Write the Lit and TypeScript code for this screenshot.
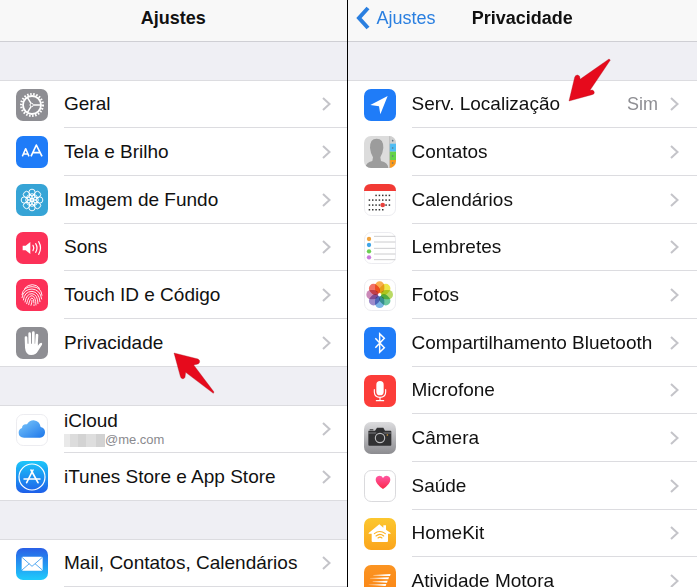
import { LitElement, html, svg, css, nothing, SVGTemplateResult, TemplateResult } from "lit";
import { customElement, property } from "lit/decorators.js";
import { classMap } from "lit/directives/class-map.js";

interface Item {
  icon: string;
  label: string;
  account?: string;
  value?: string;
  arrow?: "up" | "down";
}

interface Group {
  items: Item[];
  continues?: boolean;
}

const tile = (fill: string) => svg`<rect width="96" height="96" rx="21" fill=${fill} />`;
const paperTile = svg`<rect x="1.5" y="1.5" width="93" height="93" rx="20" fill="#fff" stroke="#ececf0" stroke-width="3" />`;
const gradient = (id: string, from: string, to: string) => svg`
  <linearGradient id=${id} x1="0" y1="0" x2="0" y2="1">
    <stop offset="0" stop-color=${from} /><stop offset="1" stop-color=${to} />
  </linearGradient>`;

const turns = [0, 45, 90, 135, 180, 225, 270, 315];
const petals = ["#f9a63a", "#ebe435", "#b3d654", "#5cc296", "#6cade2", "#9480c6", "#c67cb0", "#f16355"];
const calendarRows: [number, number, number][] = [[34, 36, 76], [48, 16, 76], [63, 16, 76], [77, 16, 56]];
const calendarDots = calendarRows.flatMap(([y, from, to]) => {
  const dots: [number, number][] = [];
  for (let x = from; x <= to; x += 10) dots.push([x, y]);
  return dots;
});

const icons: Record<string, SVGTemplateResult> = {
  general: svg`${tile("#8e8e93")}
    <g fill="none" stroke="#fff">
      <circle cx="48" cy="48" r="32.5" stroke-width="7" stroke-dasharray="4.6 4.56" />
      <circle cx="48" cy="48" r="27" stroke-width="5.5" />
      <path d="M53 48H75M45 43L34 25M45 53L34 71" stroke-width="4.4" />
      <circle cx="47" cy="48" r="5" stroke-width="3" />
    </g>`,
  display: svg`${tile("#1f7cf8")}
    <g fill="none" stroke="#fff" stroke-linejoin="round">
      <path d="M19 61L29 38L39 61M22 54H36" stroke-width="4.4" />
      <path d="M45 61L61 27L78 61M50 50H73" stroke-width="5" />
    </g>`,
  wallpaper: svg`${tile("#36a4d6")}
    <g fill="none" stroke="#fff" stroke-width="2.8">
      ${turns.map((t) => svg`<g transform="rotate(${t} 48 48)"><circle cx="48" cy="25" r="9.5" /><circle cx="48" cy="37" r="8" /></g>`)}
      <circle cx="48" cy="48" r="5" />
    </g>`,
  sounds: svg`${tile("#fc3158")}
    <path d="M20 41H29L43 30V66L29 55H20Z" fill="#fff" />
    <g fill="none" stroke="#fff" stroke-width="3.6" stroke-linecap="round">
      <path d="M51 40Q56 48 51 56" /><path d="M59 35Q67 48 59 61" /><path d="M68 29Q79 48 68 67" />
    </g>`,
  touch: svg`${tile("#fc3158")}
    <g fill="none" stroke="#fff" stroke-width="2.7" stroke-linecap="round">
      <path d="M26 28Q36 17 49 17Q62 17 71 28" />
      <path d="M18 47Q21 24 48 23Q76 24 78 49" />
      <path d="M18 56Q22 31 48 30Q73 32 77 60" />
      <path d="M22 63Q25 38 48 37Q69 39 72 68" />
      <path d="M27 69Q31 44 48 44Q65 46 66 74" />
      <path d="M32 74Q37 50 48 50Q59 52 60 78" />
      <path d="M38 77Q42 57 48 57Q54 58 54 72" />
      <path d="M45 79Q48 72 48 64M54 77V80" />
    </g>`,
  privacy: svg`${tile("#8e8e93")}
    <g stroke="#fff" stroke-width="8" stroke-linecap="round" fill="#fff">
      <path d="M30 32L31 58M41 20L41.500 55M52 17V55M63 24L61 58" />
    </g>
    <path d="M27 50V62Q29 84 46 84Q60 84 66 72L78 53Q80 48 76 47Q71 47 65 57V50Z" fill="#fff" />`,
  icloud: svg`${paperTile}
    <defs><linearGradient id="cloud" x1="0" y1="0" x2="1" y2="1">
      <stop offset="0" stop-color="#7cc8fb" /><stop offset="1" stop-color="#1c76ea" />
    </linearGradient></defs>
    <path d="M24 71Q8 70 8 56Q8 45 18 42Q19 29 33 31Q40 19 53 19Q71 21 74 39Q88 43 87 56Q85 70 72 71Z" fill="url(#cloud)" />`,
  store: svg`<defs>${gradient("store", "#1cc6f9", "#1e5fe9")}</defs>${tile("url(#store)")}
    <g fill="none" stroke="#fff" stroke-linecap="round">
      <circle cx="48" cy="48" r="39" stroke-width="3.6" />
      <path d="M51 27L32 65M45 27L66 65" stroke-width="5" />
      <path d="M24 54H72" stroke-width="4.5" />
    </g>`,
  mail: svg`<defs>${gradient("mail", "#2a5fe6", "#1fcbfc")}</defs>${tile("url(#mail)")}
    <rect x="17" y="26" width="63" height="42" rx="4" fill="#fff" />
    <path d="M18 28L48 55L79 28M18 66L40 47M79 66L57 47" fill="none" stroke="#3a9df0" stroke-width="2.6" />`,
  location: svg`${tile("#1f7cf8")}<path d="M71 21L49 76L45 52L19 48Z" fill="#fff" />`,
  contacts: svg`<defs><clipPath id="card"><rect width="96" height="96" rx="21" /></clipPath></defs>
    <g clip-path="url(#card)">
      <rect width="96" height="96" fill="#dcdcdc" />
      <path d="M4 96Q5 80 25 75L27 64Q20 54 18 36Q17 8 38 8Q59 8 58 36Q56 54 49 64L51 75Q72 80 73 96Z" fill="#9c9c9c" />
      <rect x="77" width="19" height="23" fill="#d0d0d0" />
      <rect x="77" y="23" width="19" height="24" fill="#50bdf4" />
      <rect x="77" y="47" width="19" height="25" fill="#63d348" />
      <rect x="77" y="72" width="19" height="24" fill="#fb9a1c" />
      <path d="M77 0V96" stroke="#b4b4b4" stroke-width="2" />
      <g fill="#5d7480"><circle cx="86" cy="14" r="2.500" /><circle cx="86" cy="36" r="2.500" /><circle cx="86" cy="60" r="2.500" /><circle cx="86" cy="81" r="2.500" /></g>
    </g>`,
  calendar: svg`${paperTile}
    <path d="M0 21Q0 0 21 0H75Q96 0 96 21Z" fill="#f23a35" />
    ${calendarDots.map(([x, y]) => svg`<rect x=${x - 2} y=${y - 2} width="4.500" height="4.500" fill="#333" />`)}
    <circle cx="56" cy="63" r="7" fill="#e8423d" />`,
  reminders: svg`${paperTile}
    <path d="M30 13H94M30 30H94M30 49H94M30 66H94M30 83H94" stroke="#bfbfc2" stroke-width="2.4" />
    <circle cx="15" cy="21" r="6.500" fill="#efa23c" /><circle cx="15" cy="39" r="6.500" fill="#3fa5e8" />
    <circle cx="15" cy="58" r="6.500" fill="#6bcf52" /><circle cx="15" cy="76" r="6.500" fill="#c879dc" />`,
  photos: svg`${paperTile}
    <g class="petals">
      ${petals.map((c, i) => svg`<rect x="33" y="7" width="28" height="36" rx="14" fill=${c} opacity=".9" transform="rotate(${i * 45} 47 47)" />`)}
    </g>
    <circle cx="47" cy="47" r="4.500" fill="#fff" />`,
  bluetooth: svg`${tile("#1f7cf8")}
    <path d="M34 34L61 62L47 76V20L61 34L34 62" fill="none" stroke="#fff" stroke-width="4.4" />`,
  microphone: svg`${tile("#fc3d39")}
    <rect x="37" y="18" width="22" height="43" rx="11" fill="#fff" />
    <path d="M31 44V52Q32 67 48 67Q64 67 65 52V44M48 67V76M37 77H59" fill="none" stroke="#fff" stroke-width="3.4" stroke-linecap="round" />`,
  camera: svg`<defs>${gradient("camera", "#dcdcde", "#8c8c90")}</defs>${tile("url(#camera)")}
    <path d="M14 26H33L39 17H58L63 26H80Q82 26 82 29V68Q82 71 79 71H16Q13 71 13 68V29Q13 26 14 26ZM17 22H28V25H17Z" fill="#313133" />
    <path d="M13 33H37M58 33H82" stroke="#a8a8aa" stroke-width="2" />
    <circle cx="48" cy="48" r="18" fill="#313133" />
    <circle cx="48" cy="48" r="14" fill="none" stroke="#bcbcbe" stroke-width="3.4" />
    <circle cx="70" cy="39" r="2.500" fill="#d6a040" />`,
  health: svg`<defs>${gradient("heart", "#ff58a4", "#fb2748")}</defs>
    <rect x="1.500" y="1.500" width="93" height="93" rx="20" fill="#fff" stroke="#d4d4d8" stroke-width="2.6" />
    <path d="M57 57Q36 43 35 30Q35 18 46 17Q54 17 57 24Q61 17 68 17Q79 18 79 30Q78 43 57 57Z" fill="url(#heart)" />`,
  homekit: svg`<defs>${gradient("home", "#fcc72f", "#fba51c")}</defs>${tile("url(#home)")}
    <path d="M14 45L46 19L58 29V22H66V35L80 45V47H72V69Q72 72 69 72H26Q23 72 23 69V47H14Z" fill="#fff" />
    <g fill="none" stroke="#fcb324" stroke-width="3.4" stroke-linecap="round">
      <path d="M31 47Q47 34 64 47" /><path d="M36 54Q48 44 59 54" /><path d="M42 60Q48 55 54 60" />
    </g>`,
  motion: svg`<defs>
      ${gradient("motion", "#fb9422", "#fb8414")}
      <linearGradient id="streak" gradientUnits="userSpaceOnUse" x1="12" y1="0" x2="60" y2="0">
        <stop offset="0" stop-color="#fff" stop-opacity=".2" /><stop offset="1" stop-color="#fff" />
      </linearGradient>
    </defs>${tile("url(#motion)")}
    <path d="M28 30L80 27L78 33L28 32ZM18 39L75 37L73 43L18 41ZM26 49L71 47L69 53L26 51ZM14 58L67 57L65 63L14 60ZM24 68L61 67L59 73L24 70Z" fill="url(#streak)" />`,
};

const arrows: Record<string, TemplateResult> = {
  up: html`<svg class="arrow arrow-up" viewBox="69 94 126 126" aria-hidden="true">
    <path d="M72 97L144 115Q150 118 149 124Q148 130 141 131L131 133L192 214L190 218L107 155L105 170Q103 175 97 174Q92 173 91 167Z" />
  </svg>`,
  down: html`<svg class="arrow arrow-down" viewBox="85 24 132 132" aria-hidden="true">
    <path d="M88 153L105 82Q107 75 114 75Q121 77 121 84V88L208 27L212 30L151 121L158 120Q164 122 164 128Q164 133 157 134Z" />
  </svg>`,
};

@customElement("settings-row")
class SettingsRow extends LitElement {
  @property({ attribute: false }) item!: Item;

  static styles = css`
    :host { display: block; height: 100%; }
    .row {
      display: flex;
      gap: 16px;
      height: 100%;
      box-sizing: border-box;
      padding-left: 16px;
      color: #111;
      text-decoration: none;
      position: relative;
    }
    .icon { width: 32px; height: 32px; flex: none; align-self: center; }
    .petals { isolation: isolate; }
    .petals rect { mix-blend-mode: multiply; }
    .body {
      flex: 1;
      min-width: 0;
      display: flex;
      align-items: center;
      gap: 12px;
      padding-right: var(--edge, 16px);
      border-bottom: 1px solid var(--divider, #dcdce0);
    }
    .texts { flex: 1; min-width: 0; white-space: nowrap; position: relative; }
    .label { display: block; font-size: 19px; line-height: 22px; }
    .account {
      display: flex;
      align-items: center;
      font-size: 13px;
      line-height: 16px;
      color: #8a8a8e;
    }
    .masked {
      width: 41px;
      height: 13px;
      background: linear-gradient(90deg, #e9e9e9 6px, #dcdcdc 6px 14px, #d3d3d3 14px 22px, #dedede 22px 32px, #d2d2d2 32px);
    }
    .value { font-size: 18px; color: #8e8e93; }
    .chevron { width: 9px; height: 14px; flex: none; fill: none; stroke: #c4c4c9; stroke-width: 2; }
    .arrow { position: absolute; z-index: 1; fill: #e60a1c; stroke: #a81420; stroke-width: 1; overflow: visible; }
    .arrow-up { width: 42px; height: 42px; left: 109px; top: 20px; }
    .arrow-down { width: 44px; height: 44px; left: 156px; bottom: 13px; }
  `;

  render() {
    const { icon, label, account, value, arrow } = this.item;
    return html`<a class="row" href="#${icon}">
      <svg class="icon" viewBox="0 0 96 96" aria-hidden="true">${icons[icon]}</svg>
      <span class="body">
        <span class="texts">
          <span class="label">${label}</span>
          ${account ? html`<span class="account"><span class="masked"></span>${account}</span>` : nothing}
          ${arrow ? arrows[arrow] : nothing}
        </span>
        ${value ? html`<span class="value">${value}</span>` : nothing}
        <svg class="chevron" viewBox="0 0 9 14" aria-hidden="true"><path d="M1 1L7.500 7L1 13" /></svg>
      </span>
    </a>`;
  }
}

@customElement("settings-pane")
class SettingsPane extends LitElement {
  @property() heading = "";
  @property() back = "";
  @property({ attribute: false }) groups: Group[] = [];

  static styles = css`
    :host {
      display: block;
      background: #efeff4;
      overflow-x: hidden;
      overflow-y: auto;
      scrollbar-width: none;
    }
    .bar {
      display: grid;
      grid-template-columns: 1fr auto 1fr;
      line-height: 36px;
      padding: 0 8px 5px;
      background: #f8f8f8;
      border-bottom: 1px solid #cfcfd4;
      font-size: 18px;
    }
    .heading { grid-column: 2; margin: 0; font-size: 18px; font-weight: 700; color: #111; }
    .back {
      grid-column: 1;
      grid-row: 1;
      display: flex;
      align-items: center;
      gap: 7px;
      color: #2a7fe0;
      text-decoration: none;
    }
    .back svg { width: 14px; height: 24px; fill: none; stroke: #2a7fe0; stroke-width: 4; }
    .groups { display: grid; gap: 38px; padding-top: 38px; }
    .group {
      list-style: none;
      margin: 0;
      padding: 0;
      background: #fff;
      border-top: 1px solid #dcdce0;
    }
    .cell { height: 48px; box-sizing: border-box; }
    .cell:nth-child(3n + 1) { height: 47px; }
    .closed .cell:last-child { border-bottom: 1px solid #dcdce0; --divider: transparent; }
    .closed .cell:last-child settings-row { height: calc(100% + 1px); }
  `;

  render() {
    return html`
      <header class="bar">
        ${this.back
          ? html`<a class="back" href="#ajustes">
              <svg viewBox="0 0 14 24" aria-hidden="true"><path d="M12 2L3 12L12 22" /></svg>${this.back}
            </a>`
          : nothing}
        <h1 class="heading">${this.heading}</h1>
      </header>
      <div class="groups">
        ${this.groups.map(
          (g) => html`<ul class=${classMap({ group: true, closed: !g.continues })}>
            ${g.items.map((item) => html`<li class="cell"><settings-row .item=${item}></settings-row></li>`)}
          </ul>`
        )}
      </div>
    `;
  }
}

const settings: Group[] = [
  {
    items: [
      { icon: "general", label: "Geral" },
      { icon: "display", label: "Tela e Brilho" },
      { icon: "wallpaper", label: "Imagem de Fundo" },
      { icon: "sounds", label: "Sons" },
      { icon: "touch", label: "Touch ID e Código" },
      { icon: "privacy", label: "Privacidade", arrow: "up" },
    ],
  },
  {
    items: [
      { icon: "icloud", label: "iCloud", account: "@me.com" },
      { icon: "store", label: "iTunes Store e App Store" },
    ],
  },
  { items: [{ icon: "mail", label: "Mail, Contatos, Calendários" }], continues: true },
];

const privacy: Group[] = [
  {
    items: [
      { icon: "location", label: "Serv. Localização", value: "Sim", arrow: "down" },
      { icon: "contacts", label: "Contatos" },
      { icon: "calendar", label: "Calendários" },
      { icon: "reminders", label: "Lembretes" },
      { icon: "photos", label: "Fotos" },
      { icon: "bluetooth", label: "Compartilhamento Bluetooth" },
      { icon: "microphone", label: "Microfone" },
      { icon: "camera", label: "Câmera" },
      { icon: "health", label: "Saúde" },
      { icon: "homekit", label: "HomeKit" },
      { icon: "motion", label: "Atividade Motora" },
    ],
  },
];

@customElement("app-root")
class AppRoot extends LitElement {
  static styles = css`
    :host {
      display: grid;
      grid-template-columns: 1fr calc(50% + 1px);
      height: 100vh;
      font-family: "Liberation Sans", Arial, Helvetica, sans-serif;
    }
    .pane { min-width: 0; min-height: 0; }
    .first { border-right: 1px solid #000; }
    .second { --edge: 18px; }
  `;

  render() {
    return html`
      <settings-pane class="pane first" heading="Ajustes" .groups=${settings}></settings-pane>
      <settings-pane class="pane second" heading="Privacidade" back="Ajustes" .groups=${privacy}></settings-pane>
    `;
  }
}
